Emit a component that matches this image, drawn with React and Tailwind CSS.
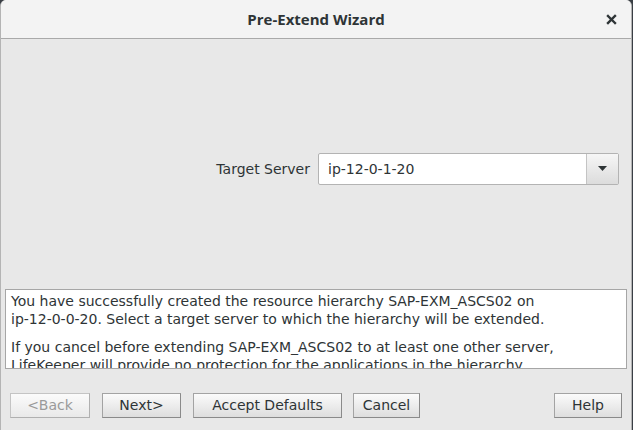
export default function App() {
  const btn =
    "h-[25px] border border-[#a3a3a3] border-r-[#8a8a8a] border-b-[#8a8a8a] bg-gradient-to-b from-[#fbfbfb] to-[#dedede] text-[14px] text-[#2e3436] flex items-center justify-center";
  return (
    <div className="w-[633px] h-[430px] bg-[#3a3f45] overflow-hidden" style={{ fontFamily: '"DejaVu Sans", "Noto Sans", sans-serif' }}>
      <div className="w-[632px] h-[430px] flex flex-col bg-[#e8e8e8] border-l border-r border-[#b4b4b4] rounded-t-[6px] overflow-hidden">
        <div className="h-[39px] shrink-0 bg-[#f3f3f3] border-b border-[#a9a9a9] flex items-center justify-center relative">
          <span className="text-[15px] font-bold text-[#2e3436]" style={{ fontFamily: '"Open Sans", sans-serif' }}>Pre-Extend Wizard</span>
          <span className="absolute right-[14px] top-[14px]">
            <svg width="11" height="11" viewBox="0 0 11 11">
              <path d="M2 2 L9 9 M9 2 L2 9" stroke="#2e3436" strokeWidth="2.4" strokeLinecap="square" />
            </svg>
          </span>
        </div>
        <div className="h-[250px] shrink-0 flex items-center justify-end pr-[12px] pt-[10px]">
          <span className="text-[14px] text-[#2e3436] mr-[8px]">Target Server</span>
          <div className="w-[301px] h-[32px] flex border border-[#b3b3b3] rounded-[2px] bg-white">
            <div className="flex-1 flex items-center pl-[9px] text-[14px] text-[#2e3436]">ip-12-0-1-20</div>
            <div className="w-[32px] border-l border-[#c4c4c4] bg-gradient-to-b from-[#f6f6f6] to-[#dcdcdc] flex items-center justify-center">
              <svg width="9" height="6" viewBox="0 0 9 6">
                <path d="M0 0 L9 0 L4.5 5 Z" fill="#2e3436" />
              </svg>
            </div>
          </div>
        </div>
        <div className="mx-[4px] h-[80px] shrink-0 bg-white border border-[#a6a6a6] overflow-hidden pl-[5px] pt-[2px] text-[14px] leading-[18px] text-[#2e3436]">
          <div>You have successfully created the resource hierarchy SAP-EXM_ASCS02 on</div>
          <div>ip-12-0-0-20. Select a target server to which the hierarchy will be extended.</div>
          <div className="mt-[10px]">If you cancel before extending SAP-EXM_ASCS02 to at least one other server,</div>
          <div>LifeKeeper will provide no protection for the applications in the hierarchy.</div>
        </div>
        <div className="flex items-start pt-[24px] px-[9px]">
          <div className={btn + " w-[80px] text-[#9a9a9a] border-[#c4c4c4] border-r-[#b0b0b0] border-b-[#b0b0b0] from-[#f8f8f8] to-[#e9e9e9]"}>&lt;Back</div>
          <div className={btn + " w-[79px] ml-[12px]"}>Next&gt;</div>
          <div className={btn + " w-[149px] ml-[12px]"}>Accept Defaults</div>
          <div className={btn + " w-[67px] ml-[11px]"}>Cancel</div>
          <div className="flex-1" />
          <div className={btn + " w-[68px]"}>Help</div>
        </div>
      </div>
    </div>
  );
}
